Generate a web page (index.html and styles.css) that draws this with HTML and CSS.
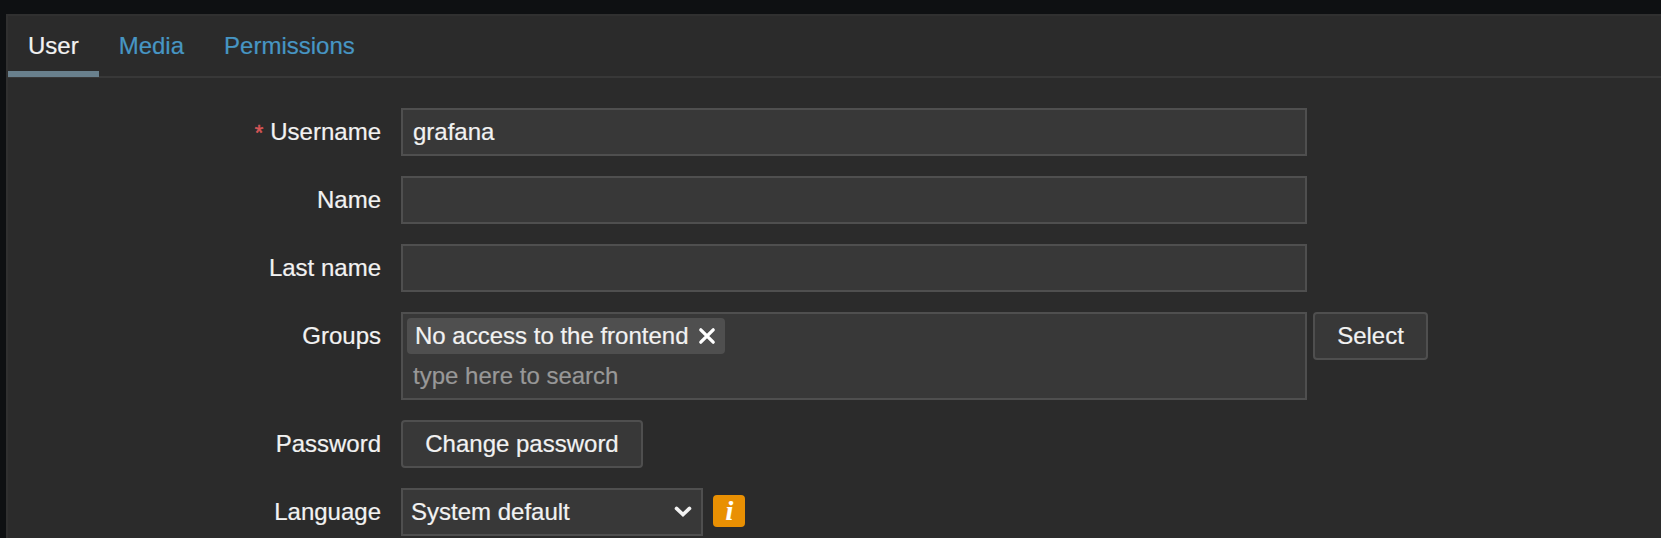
FILE: index.html
```html
<!DOCTYPE html>
<html lang="en">
<head>
<meta charset="utf-8">
<title>User</title>
<link rel="stylesheet" href="styles.css">
</head>
<body>
<main class="panel">
  <nav class="tabs">
    <a class="tab tab-active">User</a>
    <a class="tab">Media</a>
    <a class="tab">Permissions</a>
  </nav>
  <form class="form">
    <label class="label"><span class="required">*</span>Username</label>
    <div class="field"><div class="input">grafana</div></div>
    <label class="label">Name</label>
    <div class="field"><div class="input"></div></div>
    <label class="label">Last name</label>
    <div class="field"><div class="input"></div></div>
    <label class="label">Groups</label>
    <div class="field">
      <div class="multiselect">
        <div class="chip">
          <span>No access to the frontend</span>
          <svg class="chip-remove" width="18" height="18" viewBox="0 0 18 18"><path d="M2.8 2.8 15.2 15.2M15.2 2.8 2.8 15.2"/></svg>
        </div>
        <div class="placeholder">type here to search</div>
      </div>
      <button type="button" class="button button-select">Select</button>
    </div>
    <label class="label">Password</label>
    <div class="field"><button type="button" class="button button-password">Change password</button></div>
    <label class="label">Language</label>
    <div class="field field-language">
      <div class="dropdown">
        <span>System default</span>
        <svg class="chevron" width="18" height="12" viewBox="0 0 18 12"><path d="M2.5 2.4 9 8.6 15.5 2.4"/></svg>
      </div>
      <span class="info">i</span>
    </div>
  </form>
</main>
</body>
</html>
```
FILE: styles.css
```css
* { box-sizing: border-box; }
body {
  margin: 0;
  height: 538px;
  padding: 14px 0 0 6px;
  overflow: hidden;
  background: #0e1012;
  color: #f2f2f2;
  font: 24px/28px "Liberation Sans", Arial, sans-serif;
  -webkit-text-stroke: 0.2px currentColor;
}
.panel {
  height: 540px;
  border: 2px solid #303030;
  border-right: 0;
  background: #2b2b2b;
}
.tabs {
  display: flex;
  height: 62px;
  border-bottom: 2px solid #383838;
}
.tab {
  height: 61px;
  padding: 16px 20px 0;
  color: #4796c4;
}
.tab-active {
  color: #f2f2f2;
  border-bottom: 6px solid #69808d;
}
.form {
  display: grid;
  grid-template-columns: 373px 1fr;
  column-gap: 20px;
  row-gap: 20px;
  padding-top: 30px;
}
.label {
  height: 48px;
  line-height: 48px;
  text-align: right;
}
.required {
  margin-right: 7px;
  color: #d65656;
  font-size: 22px;
  -webkit-text-stroke: 0.5px #d65656;
}
.field { display: flex; align-items: flex-start; gap: 6px; }
.input, .multiselect {
  width: 906px;
  border: 2px solid #4f4f4f;
  background: #383838;
}
.input { height: 48px; padding: 0 10px; line-height: 44px; }
.multiselect { height: 88px; padding: 4px; }
.chip {
  display: flex;
  align-items: center;
  gap: 9px;
  width: 318px;
  height: 36px;
  padding-left: 8px;
  border-radius: 4px;
  background: #4f4f4f;
  white-space: nowrap;
}
.chip-remove {
  flex: none;
  fill: none;
  stroke: #fff;
  stroke-width: 3.3;
  stroke-linecap: round;
}
.placeholder { padding: 8px 6px 0; color: #989898; }
.button {
  height: 48px;
  padding: 0;
  border: 2px solid #4f4f4f;
  border-radius: 4px;
  background: #383838;
  color: #f2f2f2;
  font: inherit;
}
.button-select { width: 115px; }
.button-password { width: 242px; }
.field-language { align-items: center; gap: 10px; }
.dropdown {
  display: flex;
  align-items: center;
  justify-content: space-between;
  width: 302px;
  height: 48px;
  padding: 0 9px 0 8px;
  border: 2px solid #4f4f4f;
  background: #383838;
}
.chevron {
  fill: none;
  stroke: #f2f2f2;
  stroke-width: 3.6;
  stroke-linecap: round;
}
.info {
  width: 32px;
  height: 32px;
  margin-bottom: 2px;
  padding-left: 1px;
  border-radius: 4px;
  background: #e99003;
  color: #fff;
  font: italic bold 28px/32px "Liberation Serif", "Times New Roman", serif;
  text-align: center;
}
```
